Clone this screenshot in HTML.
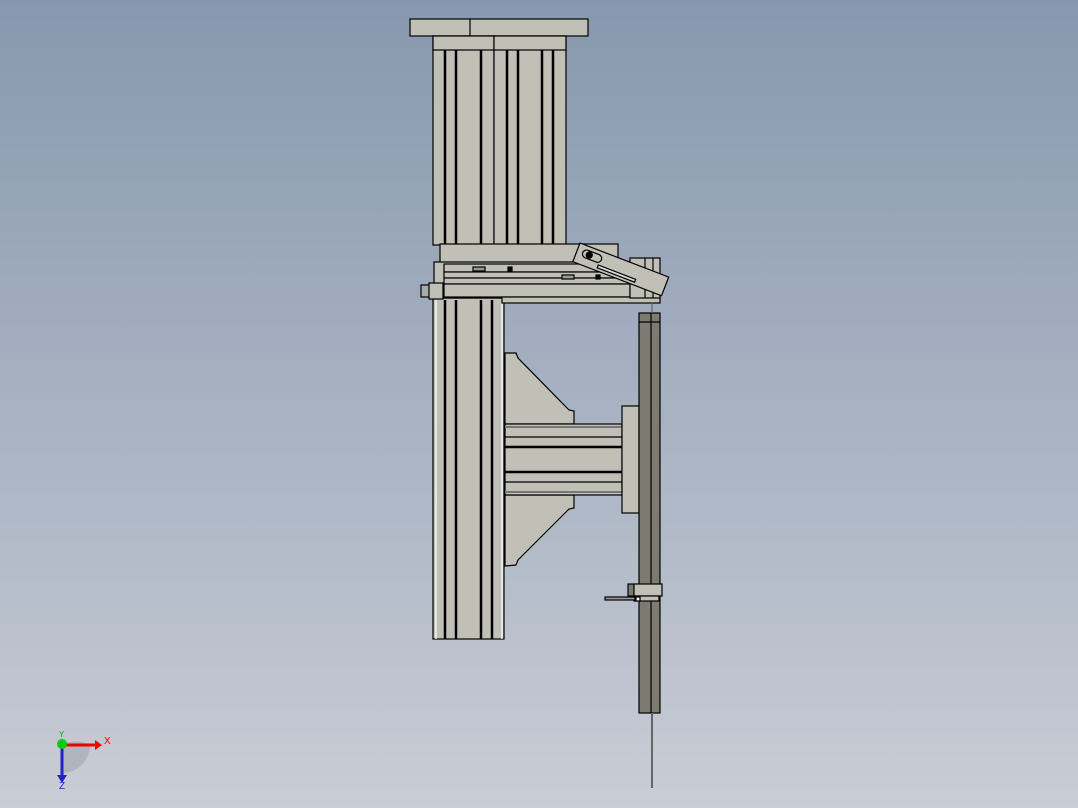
<!DOCTYPE html><html><head><style>html,body{margin:0;padding:0;width:1078px;height:808px;overflow:hidden}body{background:linear-gradient(#8798ae,#aab4c4 55%,#c9cdd5)}svg{display:block}</style></head><body>
<svg width="1078" height="808" viewBox="0 0 1078 808" xmlns="http://www.w3.org/2000/svg" stroke="#000" stroke-width="1.2" fill="#c0c0b6">
<rect x="410" y="19" width="178" height="17"/>
<line x1="470" y1="19" x2="470" y2="36"/>
<rect x="433" y="36" width="61" height="209"/>
<rect x="494" y="36" width="72" height="209"/>
<rect x="433" y="36" width="61" height="14"/><rect x="494" y="36" width="72" height="14"/>
<g stroke-width="2.5"><line x1="445" y1="50" x2="445" y2="245"/><line x1="456" y1="50" x2="456" y2="245"/><line x1="481" y1="50" x2="481" y2="245"/><line x1="507" y1="50" x2="507" y2="245"/><line x1="518" y1="50" x2="518" y2="245"/><line x1="542" y1="50" x2="542" y2="245"/><line x1="553" y1="50" x2="553" y2="245"/></g>
<rect x="433" y="298" width="71" height="341"/>
<g stroke-width="2.5"><line x1="445" y1="300" x2="445" y2="639"/><line x1="456" y1="300" x2="456" y2="639"/><line x1="481" y1="300" x2="481" y2="639"/><line x1="492" y1="300" x2="492" y2="639"/></g>
<line x1="436" y1="300" x2="436" y2="639" stroke="#fff"/><line x1="502" y1="300" x2="502" y2="639" stroke="#fff"/>
<rect x="440" y="244" width="178" height="19"/>
<rect x="434" y="262" width="197" height="36"/>
<rect x="444" y="264" width="186" height="8"/><rect x="444" y="272" width="186" height="6"/><rect x="444" y="278" width="186" height="6" />
<rect x="444" y="284" width="186" height="13"/>
<rect x="473" y="267" width="12" height="4" fill="#999"/><rect x="508" y="267" width="4" height="4" fill="#000"/>
<rect x="562" y="275" width="12" height="4" fill="#999"/><rect x="596" y="275" width="4" height="4" fill="#000"/>
<rect x="502" y="297" width="158" height="6"/>
<rect x="421" y="285" width="13" height="12" fill="#aaa"/><rect x="429" y="283" width="14" height="16"/>
<rect x="630" y="258" width="30" height="40"/><line x1="645" y1="258" x2="645" y2="298"/><line x1="653" y1="258" x2="653" y2="298"/>
<g transform="translate(580,243) rotate(21)"><rect x="0" y="0" width="95" height="20"/><rect x="6" y="4" width="20" height="8" rx="4" fill="#c0c0b6"/><circle cx="13" cy="8" r="3" fill="#000"/><rect x="25" y="14" width="40" height="3" fill="#ddd"/></g>
<polygon points="505,353 516,353 518,358 569,410 574,411 574,424 505,424"/>
<polygon points="505,495 574,495 574,508 569,509 518,560 516,565 505,566"/>
<rect x="505" y="424" width="117" height="71"/>
<line x1="505" y1="427" x2="622" y2="427" stroke="#777" stroke-width="2"/><line x1="505" y1="492" x2="622" y2="492" stroke="#777" stroke-width="2"/>
<line x1="505" y1="437" x2="622" y2="437"/><line x1="505" y1="447" x2="622" y2="447" stroke-width="2.5"/><line x1="505" y1="472" x2="622" y2="472" stroke-width="2.5"/><line x1="505" y1="482" x2="622" y2="482"/>
<rect x="622" y="406" width="17" height="107"/>
<rect x="639" y="313" width="21" height="400" fill="#7b7b71"/><line x1="651" y1="313" x2="651" y2="713"/>
<line x1="639" y1="322" x2="660" y2="322"/>
<line x1="652" y1="303" x2="652" y2="313" stroke="#666"/>
<rect x="628" y="584" width="6" height="12" fill="#7a7a6f"/><rect x="634" y="584" width="28" height="12"/>
<rect x="634" y="596" width="25" height="5"/><rect x="636" y="597" width="4" height="4" fill="#fff"/>
<rect x="605" y="597" width="30" height="3" fill="#999"/>
<line x1="652" y1="713" x2="652" y2="788" stroke="#666" stroke-width="2"/>
<path d="M62 745 A28 28 0 0 1 90 745 A28 28 0 0 1 62 773 Z" fill="#b0b4bc" stroke="none"/>
<line x1="62" y1="745" x2="95" y2="745" stroke="#e00" stroke-width="3"/><polygon points="95,740 102,745 95,750" fill="#e00" stroke="none"/>
<line x1="62" y1="745" x2="62" y2="775" stroke="#22c" stroke-width="3"/><polygon points="57,775 62,783 67,775" fill="#22c" stroke="none"/>
<circle cx="62" cy="744" r="5" fill="#0c0" stroke="none"/>
<text x="104" y="744" font-family="Liberation Sans" font-size="10" fill="#e00" stroke="none">X</text>
<text x="59" y="789" font-family="Liberation Sans" font-size="10" fill="#22c" stroke="none">Z</text>
<text x="59" y="737" font-family="Liberation Sans" font-size="8" fill="#0a0" stroke="none">Y</text>
</svg></body></html>
